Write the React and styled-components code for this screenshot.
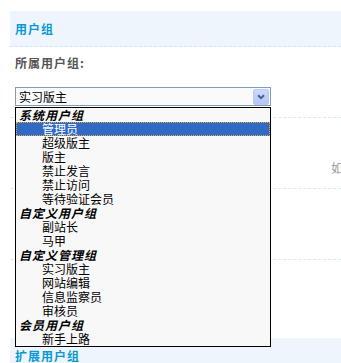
import React from "react";
import styled, { createGlobalStyle } from "styled-components";

const Global = createGlobalStyle`
  html, body { margin: 0; padding: 0; background: #fff; overflow: hidden; }
  body { font-family: "Noto Sans CJK SC", "Liberation Sans", sans-serif; font-size: 12px; }
`;

const Page = styled.div`
  padding: 11px 0 0 10px;
  width: 331px;
`;

const SectionHead = styled.div`
  height: 35px;
  line-height: 35px;
  padding-left: 5px;
  background: #eef5fc;
  border-bottom: ${(p) => (p.$dashed ? "1px dashed #d3e5f5" : "none")};
  color: #0a99d2;
  font-weight: bold;
  font-size: 12px;
  letter-spacing: 1px;
  white-space: nowrap;
`;

const Row = styled.div`
  height: ${(p) => p.$h}px;
  border-bottom: ${(p) => (p.$dashed ? "1px dashed #dbe8f4" : "none")};
  position: relative;
  overflow: visible;
`;

const RowInner = styled.div`
  padding: 8px 0 0 5px;
  display: flex;
  flex-direction: column;
  gap: 16px;
  align-items: flex-start;
`;

const Label = styled.div`
  color: #555;
  font-weight: bold;
  font-size: 12px;
  letter-spacing: 1px;
  line-height: 16px;
`;

const Hint = styled.div`
  padding: ${(p) => p.$top}px 0 0 321px;
  color: #999;
  font-size: 12px;
  line-height: 14px;
  white-space: nowrap;
`;

const SelectWrap = styled.div`
  position: relative;
  width: 256px;
  z-index: 2;
`;

const SelectBox = styled.div`
  box-sizing: border-box;
  height: 19px;
  border: 1px solid #7f9db9;
  background: #fafafa;
  display: flex;
  align-items: flex-start;
  padding: 1px 1px 0 3px;
`;

const SelectText = styled.div`
  flex: 1;
  color: #000;
  font-size: 12px;
  line-height: 16px;
`;

const ArrowBtn = styled.div`
  box-sizing: border-box;
  width: 16px;
  height: 16px;
  border: 1px solid #b8cbf2;
  border-radius: 2px;
  background: linear-gradient(#cbd9fc, #b3c6f5);
  display: flex;
  align-items: center;
  justify-content: center;
`;

const List = styled.div`
  position: absolute;
  left: 0;
  top: 20px;
  width: 256px;
  box-sizing: border-box;
  border: 1px solid #000;
  background: #f8f8f8;
`;

const Item = styled.div`
  box-sizing: border-box;
  height: 14px;
  line-height: 14px;
  font-size: 12px;
  white-space: nowrap;
  color: ${(p) => (p.$sel ? "#fff" : "#000")};
  background: ${(p) => (p.$sel ? "#316ac5" : "transparent")};
  outline: ${(p) => (p.$sel ? "1px dotted #e8a838" : "none")};
  outline-offset: -1px;
  padding-left: ${(p) => (p.$group ? 3 : 26)}px;
  font-weight: ${(p) => (p.$group ? "bold" : "normal")};
  font-style: ${(p) => (p.$group ? "italic" : "normal")};
  letter-spacing: ${(p) => (p.$group ? "1px" : "0")};
`;

const items = [
  ["系统用户组", true],
  ["管理员", false, true],
  ["超级版主"],
  ["版主"],
  ["禁止发言"],
  ["禁止访问"],
  ["等待验证会员"],
  ["自定义用户组", true],
  ["副站长"],
  ["马甲"],
  ["自定义管理组", true],
  ["实习版主"],
  ["网站编辑"],
  ["信息监察员"],
  ["审核员"],
  ["会员用户组", true],
  ["新手上路"],
];

export default function App() {
  return (
    <>
      <Global />
      <Page>
        <SectionHead $dashed>用户组</SectionHead>
        <Row $h={70} $dashed>
          <RowInner>
            <Label>所属用户组:</Label>
            <SelectWrap>
              <SelectBox>
                <SelectText>实习版主</SelectText>
                <ArrowBtn>
                  <svg width="8" height="6" viewBox="0 0 8 6">
                    <path d="M1 1.2 L4 4.2 L7 1.2" fill="none" stroke="#4d6185" strokeWidth="2" />
                  </svg>
                </ArrowBtn>
              </SelectBox>
              <List>
                {items.map(([t, g, s], i) => (
                  <Item key={i} $group={g} $sel={s}>
                    {t}
                  </Item>
                ))}
              </List>
            </SelectWrap>
          </RowInner>
        </Row>
        <Row $h={70} $dashed>
          <Hint $top={43}>如</Hint>
        </Row>
        <Row $h={70} $dashed />
        <Row $h={78} />
        <SectionHead>扩展用户组</SectionHead>
      </Page>
    </>
  );
}
